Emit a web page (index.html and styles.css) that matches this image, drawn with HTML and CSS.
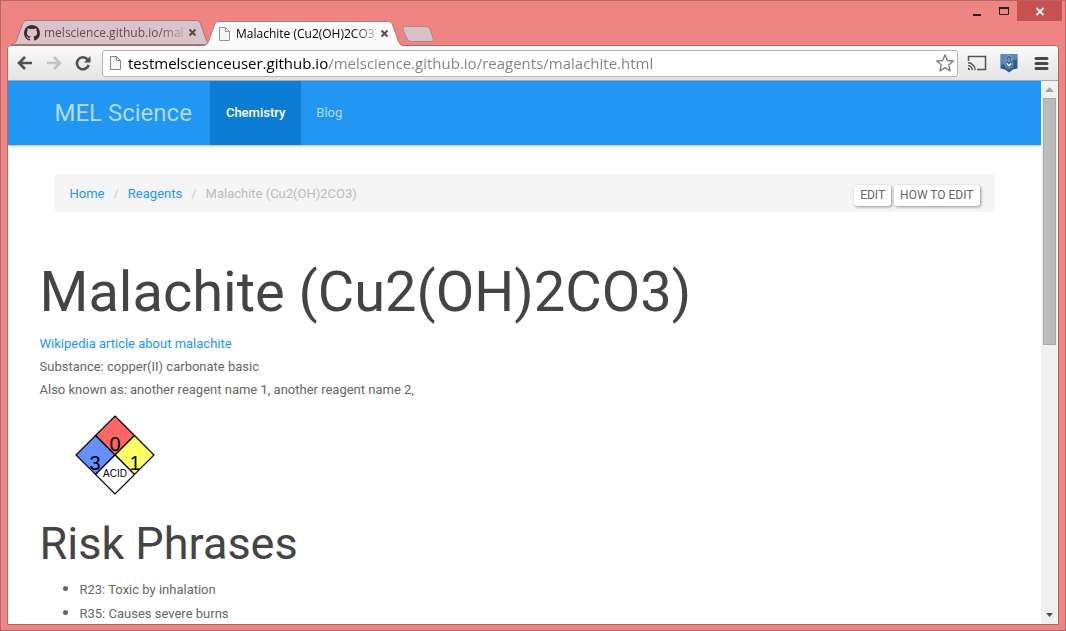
FILE: index.html
```html
<!DOCTYPE html>
<html lang="en">
<head>
<meta charset="utf-8">
<title>Malachite (Cu2(OH)2CO3)</title>
<link rel="stylesheet" href="styles.css">
</head>
<body>
<div class="window">
  <header class="titlebar">
    <div class="tabs">
      <div class="tab tab-back">
        <svg class="tab-shape" viewBox="0 0 200 25" preserveAspectRatio="none" aria-hidden="true"><path d="M0 24.500C4 24 5 22 6 19L11 5C12 2 13 .5 16 .5H184C188 .5 189 2 190 5L195 19C196 22 197 24 200 24.500Z" fill="#d9c4ca" stroke="#a4777c"/></svg>
        <svg class="tab-icon" viewBox="0 0 16 16" aria-hidden="true"><path fill="#41292d" d="M8 0C3.580 0 0 3.580 0 8c0 3.540 2.290 6.530 5.470 7.590.4.070.55-.17.55-.38v-1.490c-2.230.48-2.690-.95-2.690-.95-.36-.92-.89-1.170-.89-1.170-.73-.5.050-.48.050-.48.8.050 1.230.83 1.230.83.71 1.220 1.870.87 2.330.66.070-.52.280-.87.500-1.070-1.780-.2-3.640-.89-3.640-3.950 0-.87.310-1.590.82-2.150-.08-.2-.36-1.020.080-2.120 0 0 .67-.21 2.200.82a7.600 7.600 0 0 1 4 0c1.530-1.040 2.200-.82 2.200-.82.440 1.100.160 1.920.080 2.120.510.560.820 1.270.820 2.150 0 3.070-1.870 3.750-3.650 3.950.290.250.540.730.540 1.480v2.190c0 .21.150.46.550.38A8 8 0 0 0 16 8c0-4.420-3.580-8-8-8z"/></svg>
        <span class="tab-title">melscience.github.io/mal</span>
        <button class="tab-close" aria-label="Close tab"><svg viewBox="0 0 9 9"><path d="M1.500 1.500 7.500 7.500M7.500 1.500 1.500 7.500"/></svg></button>
      </div>
      <div class="tab tab-front">
        <svg class="tab-shape" viewBox="0 0 200 25" preserveAspectRatio="none" aria-hidden="true"><path d="M0 25C4 24 5 22 6 19L11 5C12 2 13 .5 16 .5H184C188 .5 189 2 190 5L195 19C196 22 197 24 200 25" fill="#fbfbfb" stroke="#b07a7c"/></svg>
        <svg class="tab-icon" viewBox="0 0 16 16" aria-hidden="true"><path d="M3.500 1.500H9.500L13.500 5.500V14.500H3.500ZM9.500 1.500V5.500H13.500" fill="#f6f6f6" stroke="#969696"/></svg>
        <span class="tab-title">Malachite (Cu2(OH)2CO3)</span>
        <button class="tab-close" aria-label="Close tab"><svg viewBox="0 0 9 9"><path d="M1.500 1.500 7.500 7.500M7.500 1.500 1.500 7.500"/></svg></button>
      </div>
      <button class="new-tab" aria-label="New tab"><svg viewBox="0 0 32 16"><path d="M3 .5H24Q27 .5 28 3L31 12Q32 15.500 28 15.500H10Q6 15.500 5 13L1 4Q0 .5 3 .5Z" fill="#d6c2c8" stroke="#b08489"/></svg></button>
    </div>
    <div class="window-controls">
      <button class="window-button" aria-label="Minimize"><svg viewBox="0 0 12 10"><path d="M2 9H10" stroke="#222" stroke-width="2"/></svg></button>
      <button class="window-button" aria-label="Maximize"><svg viewBox="0 0 12 10"><path d="M1.500 2H10.500V8.500H1.500Z" fill="none" stroke="#222"/><path d="M1 2H11" stroke="#222" stroke-width="2"/></svg></button>
      <button class="window-button window-close" aria-label="Close"><svg viewBox="0 0 12 10"><path d="M2.500 2 9.500 9M9.500 2 2.500 9" stroke="#fff" stroke-width="1.800"/></svg></button>
    </div>
  </header>

  <div class="browser">
    <div class="toolbar">
      <button class="tool" aria-label="Back"><svg viewBox="0 0 16 16"><path d="M15 8H2.500M8 2 2 8 8 14" fill="none" stroke="#505050" stroke-width="2.600"/></svg></button>
      <button class="tool" aria-label="Forward" disabled><svg viewBox="0 0 16 16"><path d="M1 8H13.500M8 2 14 8 8 14" fill="none" stroke="#c4c4c4" stroke-width="2.600"/></svg></button>
      <button class="tool" aria-label="Reload"><svg viewBox="0 0 16 16"><path d="M12.500 4.300A6 6 0 1 0 13.700 10" fill="none" stroke="#505050" stroke-width="2.600"/><path d="M15.500 1V7.500H9Z" fill="#505050"/></svg></button>
      <div class="address">
        <svg class="address-icon" viewBox="0 0 16 16" aria-hidden="true"><path d="M3.500 1.500H9.500L13.500 5.500V14.500H3.500ZM9.500 1.500V5.500H13.500" fill="#f8f8f8" stroke="#858585"/></svg>
        <input class="address-input" type="text" aria-label="Address" value="testmelscienceuser.github.io/melscience.github.io/reagents/malachite.html">
        <button class="star" aria-label="Bookmark this page"><svg viewBox="0 0 20 20"><path d="M10 1.800 12.300 7.500 18.300 8 13.700 11.900 15.200 17.900 10 14.600 4.800 17.900 6.300 11.900 1.700 8 7.700 7.500Z" fill="#fff" stroke="#7b7b7b" stroke-width="1.300" stroke-linejoin="round"/></svg></button>
      </div>
      <button class="extension" aria-label="Cast"><svg viewBox="0 0 20 20"><path d="M1.500 8V3.500H18.500V16.500H10" fill="none" stroke="#555" stroke-width="1.500"/><path d="M1 9.800A7.200 7.200 0 0 1 8.200 17M1 12.600A4.400 4.400 0 0 1 5.400 17" fill="none" stroke="#555" stroke-width="1.400"/><path d="M1 14.800A2.200 2.200 0 0 1 3.200 17H1Z" fill="#555"/></svg></button>
      <button class="extension" aria-label="Extension"><svg viewBox="0 0 20 20"><path d="M1.500 1H18.500V15.500L14 16.500 10 19.500 6 16.500 1.500 15.500Z" fill="#2f5c90"/><path d="M2 1H18V6L2 12Z" fill="#5f88b4"/><path d="M10 2.500A2.800 2.800 0 0 1 11.800 7.600A4 4 0 1 1 8.200 7.600A2.800 2.800 0 0 1 10 2.500Z" fill="#46698f" stroke="#8fb0cc" stroke-width=".8"/><path d="M10 5V9" stroke="#b8cfe2" stroke-width=".8"/><path d="M7.800 10.500 10 12.800 12.200 10.500" fill="none" stroke="#fff" stroke-width="1.300"/></svg></button>
      <button class="extension" aria-label="Menu"><svg viewBox="0 0 20 20"><path d="M5 5.500H16M5 10.500H16M5 15.500H16" stroke="#484848" stroke-width="3" stroke-linecap="round"/></svg></button>
    </div>

    <div class="viewport">
      <div class="page">
        <nav class="navbar">
          <div class="container nav-row">
            <a class="brand" href="#">MEL Science</a>
            <a class="nav-link nav-active" href="#">Chemistry</a>
            <a class="nav-link" href="#">Blog</a>
          </div>
        </nav>
        <main class="container">
          <div class="breadcrumb">
            <ol class="crumbs">
              <li><a href="#">Home</a></li>
              <li><a href="#">Reagents</a></li>
              <li>Malachite (Cu2(OH)2CO3)</li>
            </ol>
            <div class="actions">
              <button class="action">EDIT</button>
              <button class="action">HOW TO EDIT</button>
            </div>
          </div>
          <article class="article">
            <h1 class="title">Malachite (Cu2(OH)2CO3)</h1>
            <div><a href="#">Wikipedia article about malachite</a></div>
            <div>Substance: copper(II) carbonate basic</div>
            <div>Also known as: another reagent name 1, another reagent name 2,</div>
            <svg class="hazard" viewBox="0 0 80 80" role="img" aria-label="Hazard diamond">
              <g stroke="#000" stroke-width="1.200">
                <path d="M40 1 59.500 20.500 40 40 20.500 20.500Z" fill="#f66"/>
                <path d="M20.500 20.500 40 40 20.500 59.500 1 40Z" fill="#6690ff"/>
                <path d="M59.500 20.500 79 40 59.500 59.500 40 40Z" fill="#ff6"/>
                <path d="M40 40 59.500 59.500 40 79 20.500 59.500Z" fill="#fff"/>
              </g>
              <g class="hazard-text">
                <text x="40" y="36">0</text><text x="20" y="55">3</text><text x="60" y="55">1</text>
                <text class="hazard-note" x="40" y="62">ACID</text>
              </g>
            </svg>
            <h2 class="subtitle">Risk Phrases</h2>
            <ul class="risks">
              <li>R23: Toxic by inhalation</li>
              <li>R35: Causes severe burns</li>
            </ul>
          </article>
        </main>
      </div>
      <div class="scrollbar" aria-hidden="true">
        <svg class="arrow" viewBox="0 0 17 17"><path d="M4 11 8.500 6 13 11Z" fill="#a3a3a3"/></svg>
        <div class="track"><div class="thumb"></div></div>
        <svg class="arrow" viewBox="0 0 17 17"><path d="M5 6H12L8.500 10Z" fill="#505050"/></svg>
      </div>
    </div>
  </div>
</div>
</body>
</html>
```
FILE: styles.css
```css
* { box-sizing: border-box; }
body { margin: 0; font-family: Roboto, "Liberation Sans", sans-serif; font-size: 13px; line-height: 23px; color: #666; }
button { border: 0; padding: 0; margin: 0; background: none; font: inherit; color: inherit; }
svg { display: block; }
a { color: #2196f3; text-decoration: none; }

.window { display: flex; flex-direction: column; height: 100vh; padding: 0 6px 5px; border: 1px solid #b66466; background: #ef8583; overflow: hidden; }

.titlebar { display: flex; justify-content: space-between; flex: none; height: 44px; margin-right: -3px; }
.tabs { display: flex; align-items: flex-end; padding-left: 4px; }
.tab { position: relative; display: flex; align-items: center; width: 200px; height: 25px; padding: 0 14px 0 13px; font: 12px/24px "Open Sans", sans-serif; }
.tab-front { z-index: 1; margin: 0 0 -1px -8px; color: #000; }
.tab-back { color: #6b4a50; }
.tab-shape { position: absolute; inset: 0; width: 100%; height: 100%; }
.tab-icon { position: relative; flex: none; width: 16px; height: 16px; margin-right: 4px; }
.tab-title { position: relative; flex: 1; min-width: 0; white-space: nowrap; mask-image: linear-gradient(to right, #000 116px, rgba(0, 0, 0, .2) 140px); }
.tab-close { position: relative; flex: none; margin: 0 0 0 4px; }
.tab-close svg { width: 9px; height: 9px; fill: none; stroke: #5c4a4c; stroke-width: 2; }
.new-tab { margin: 0 0 3px -1px; }
.new-tab svg { width: 32px; height: 16px; }
.window-controls { display: flex; height: 20px; }
.window-button { display: flex; align-items: center; justify-content: center; width: 27px; }
.window-button svg { width: 12px; height: 10px; }
.window-close { width: 45px; background: #c75050; }

.browser { display: flex; flex-direction: column; flex: 1; min-height: 0; border: 1px solid #a8696b; border-radius: 4px 4px 0 0; background: #fff; overflow: hidden; }
.toolbar { display: flex; align-items: center; flex: none; height: 35px; padding: 0 7px 0 9px; border-bottom: 1px solid #aaa; background: linear-gradient(#fafafa, #e3e3e3); }
.tool { flex: none; width: 16px; margin-right: 13px; }
.tool svg { width: 16px; height: 16px; }
.address { display: flex; align-items: center; flex: 1; min-width: 0; height: 27px; margin-right: 9px; padding: 0 2px 0 4px; border: 1px solid #b5b5b5; border-radius: 3px; background: #fff; }
.tool + .address { margin-left: -2px; }
.address-icon { flex: none; width: 16px; height: 16px; margin-right: 5px; }
.address-input { flex: 1; min-width: 0; padding: 0; border: 0; outline: 0; font: 15px/22px "Open Sans", sans-serif; color: transparent; background: linear-gradient(to right, #000 200px, #808080 200px); background-clip: text; -webkit-background-clip: text; }
.star svg, .extension svg { width: 20px; height: 20px; }
.extension { margin-right: 12px; }
.extension:last-child { margin-right: 0; }

.viewport { display: flex; flex: 1; min-height: 0; }
.page { flex: 1; min-width: 0; overflow: hidden; background: #fff; }
.container { width: 100%; max-width: 970px; margin: 0 auto; padding: 0 15px; }
.navbar { background: #2196f3; box-shadow: 0 1px 2px rgba(0, 0, 0, .3); }
.nav-row { display: flex; align-items: stretch; height: 64px; line-height: 64px; }
.brand { padding-right: 18px; font-size: 24px; color: #b2dbfb; }
.nav-link { padding: 0 15px; color: #b2dbfb; }
.nav-active { padding: 0 16px; background: #0c7cd5; color: #fff; font-weight: 500; }

.breadcrumb { display: flex; justify-content: space-between; height: 38px; margin: 29px 0 49px; padding: 8px 15px; border-radius: 3px; background: #f5f5f5; }
.crumbs { display: flex; margin: 0; padding: 0; list-style: none; color: #bbb; }
.crumbs li + li::before { content: "/"; padding: 0 9px; color: #ccc; }
.actions { display: flex; gap: 3px; padding-top: 3px; }
.action { height: 21px; padding: 0 6px; border-radius: 3px; background: #fff; box-shadow: 1px 1px 3px rgba(0, 0, 0, .4); font-size: 12px; line-height: 21px; }

.article { margin: 0 -15px; }
.title, .subtitle { margin: 0; font-weight: 400; color: #444; }
.title { margin-bottom: 9px; font-size: 56px; line-height: 62px; }
.hazard { width: 80px; height: 80px; margin: 14px 0 24px 35px; }
.hazard-text { font: 20px "Liberation Sans", sans-serif; text-anchor: middle; }
.hazard-note { font-size: 10px; }
.subtitle { margin-bottom: 8px; font-size: 45px; line-height: 50px; }
.risks { margin: 0; padding-left: 40px; }
.risks li::marker { font-size: 16px; }

.scrollbar { display: flex; flex-direction: column; flex: none; width: 17px; background: #f0f0f0; }
.arrow { width: 17px; height: 17px; flex: none; }
.track { flex: 1; padding: 0 2px; }
.thumb { height: 48.500%; border: 1px solid #a8a8a8; background: #bcbcbc; }
```
